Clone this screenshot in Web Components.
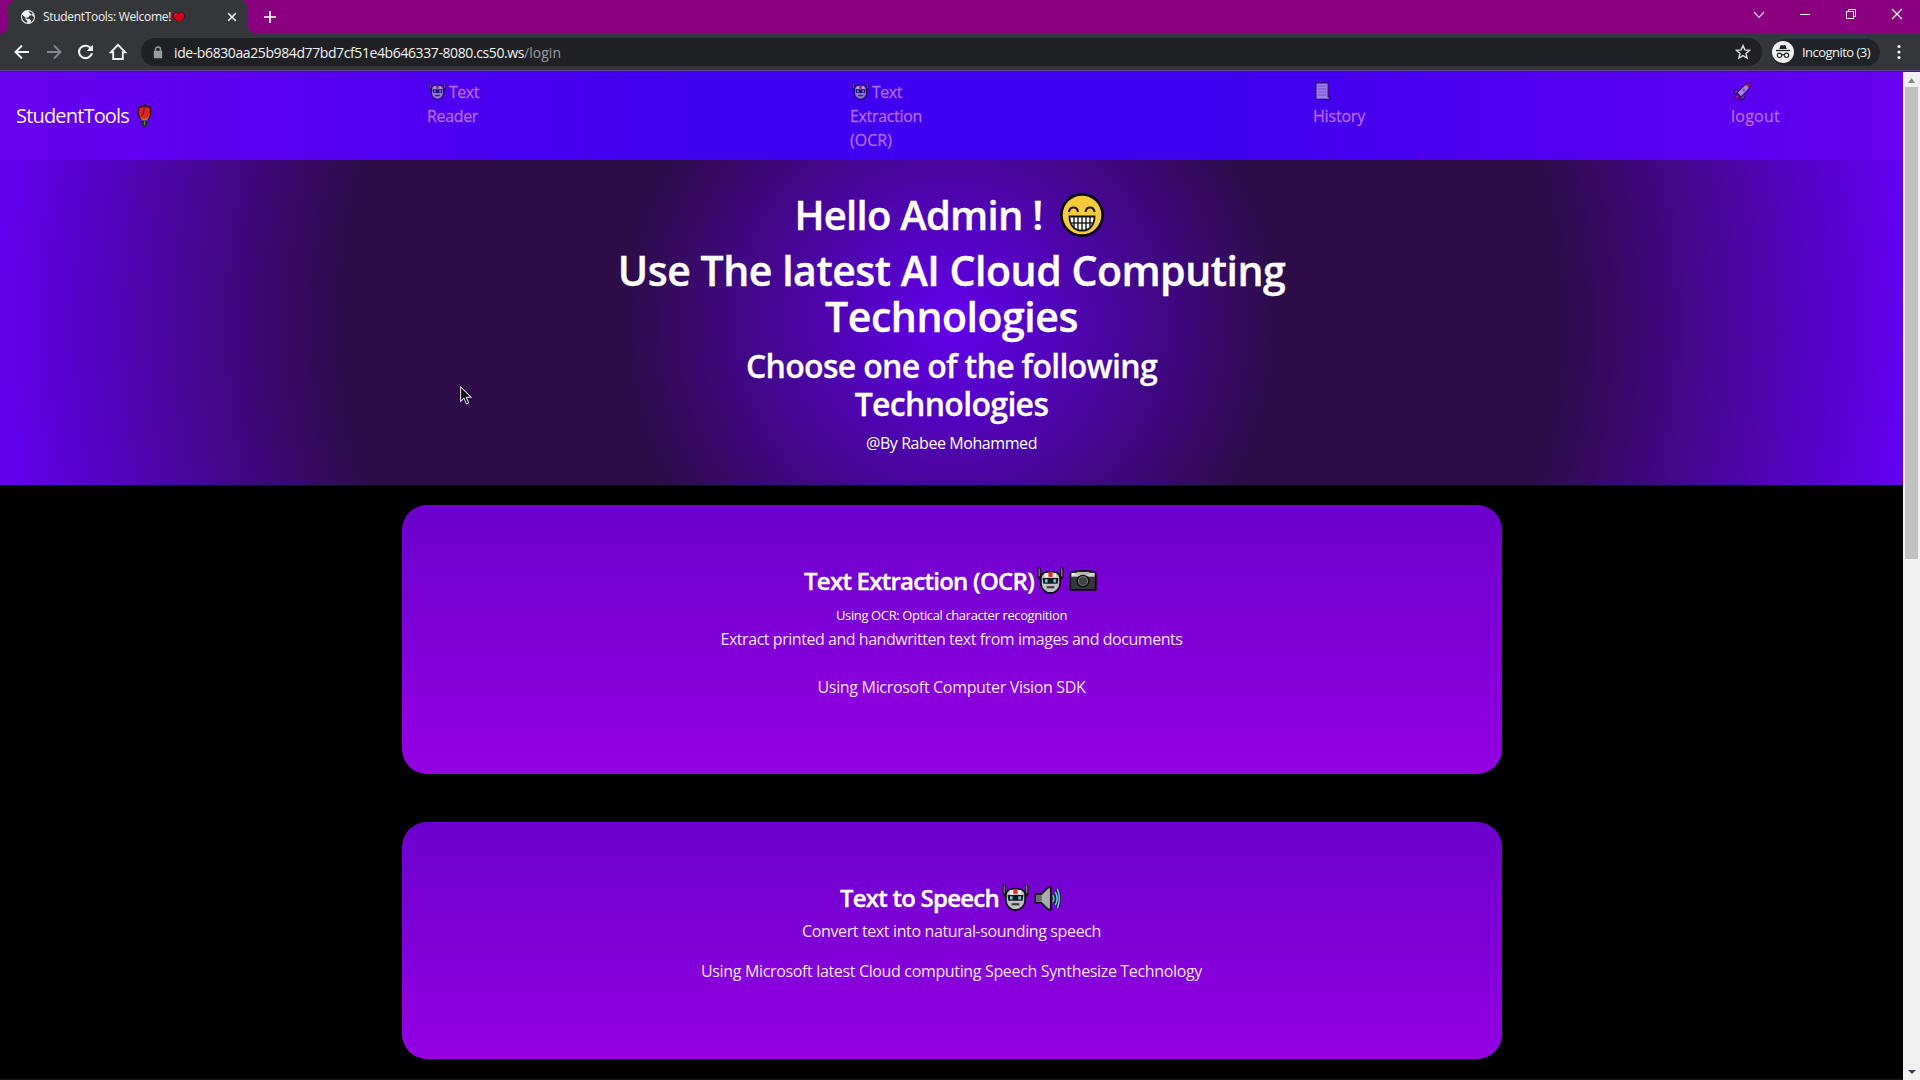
<!DOCTYPE html>
<html lang="en">
<head>
<meta charset="utf-8">
<title>StudentTools: Welcome!</title>
<style>
html,body{margin:0;height:100%;background:#000;overflow:hidden}
body{font-family:"Open Sans","Noto Sans",sans-serif;color:#fff}
</style>
</head>
<body>
<student-app></student-app>
<script>
const ICONS = {
  globe: ['0 0 16 16', '<circle cx="8" cy="8" r="7" fill="#f1f1f3"/><path d="M2 5.8l3.4 2.6.3 2.4 1.6 1v2c-3-.4-5.2-3-5.3-6zM8.2 2.2l3 .6 1.6 1.7-1.6 1.9-2 .2-.4 1.7-2.2.2-.2 1.3 3 .2 1.7 1.4-.4 2c2-1 3.2-3 3.3-5.2" fill="#35363a"/>'],
  heart: ['0 0 16 16', '<path d="M8 14.500L1.600 7.700V3.800L4 1.600h2l2 1.800 2-1.800h2l2.400 2.200v3.900z" fill="#d9001b" stroke="#3b0d18" stroke-width="1"/><path d="M3.500 4.500l1.500-1" stroke="#f0405a" stroke-width="1.300"/>'],
  x: ['0 0 10 10', '<path d="M1.2 1.2l7.600 7.600M8.800 1.2L1.2 8.800" stroke="#f1f1f3" stroke-width="1.600"/>'],
  plus: ['0 0 12 12', '<path d="M6 0v12M0 6h12" stroke="#fff" stroke-width="1.700"/>'],
  back: ['0 0 16 16', '<path d="M15 8H2M8 1.500L1.500 8 8 14.500" fill="none" stroke="#f1f1f3" stroke-width="1.900"/>'],
  fwd: ['0 0 16 16', '<path d="M1 8h13M8 1.500L14.500 8 8 14.500" fill="none" stroke="#85868d" stroke-width="1.800"/>'],
  reload: ['0 0 16 16', '<path d="M13.300 4.600A6.200 6.200 0 1 0 14.100 9.200" fill="none" stroke="#f1f1f3" stroke-width="2"/><path d="M15 .8v6.200H8.800z" fill="#f1f1f3"/>'],
  home: ['0 0 18 18', '<path d="M1.700 9.300L9 1.900l7.300 7.400h-2.500V16H4.200V9.300z" fill="none" stroke="#f1f1f3" stroke-width="1.900"/>'],
  lock: ['0 0 10 13', '<path d="M2.500 6V3.500a2.500 2.500 0 0 1 5 0V6" fill="none" stroke="#9b9ca0" stroke-width="1.400"/><rect x=".8" y="4.800" width="8.400" height="7.400" rx="1" fill="#9b9ca0"/>'],
  star: ['0 0 16 16', '<path d="M8 1.600l1.900 4.300 4.700.4-3.600 3.100 1.100 4.600L8 11.600 3.900 14 5 9.400 1.400 6.300l4.700-.4z" fill="none" stroke="#dadbde" stroke-width="1.400"/>'],
  spy: ['0 0 22 22', '<circle cx="11" cy="11" r="11" fill="#f1f1f3"/><path d="M7.300 8l1.100-3.500 1.200-.4 1.400.5 1.400-.5 1.200.4L14.700 8z" fill="#202124"/><path d="M4 9.500h14" stroke="#202124" stroke-width="1.300"/><g fill="none" stroke="#202124" stroke-width="1.100"><circle cx="7.500" cy="14.300" r="2.200"/><circle cx="14.500" cy="14.300" r="2.200"/><path d="M9.700 14q1.300-.8 2.600 0"/></g>'],
  dots: ['0 0 4 16', '<circle cx="2" cy="2.500" r="1.600"/><circle cx="2" cy="8" r="1.600"/><circle cx="2" cy="13.500" r="1.600"/>'],
  chev: ['0 0 12 8', '<path d="M1 1l5 5.300L11 1" fill="none" stroke="#f0c8ee" stroke-width="1.200"/>'],
  min: ['0 0 12 12', '<path d="M1 6.500h10" stroke="#fff"/>'],
  restore: ['0 0 12 12', '<path d="M3.500 3.500v-2h7v7h-2M1.500 3.500h7v7h-7z" fill="none" stroke="#fff"/>'],
  close: ['0 0 12 12', '<path d="M1 1l10 10M11 1L1 11" stroke="#fff" stroke-width="1.150"/>'],
  robot: ['0 0 28 28', '<path d="M2.200.5v9.500l2.500 4M25.800.5v9.500l-2.500 4" fill="none" stroke="#15151a" stroke-width="3.400"/><path d="M2.300 1.500v8M25.700 1.500v8" stroke="#8f9096" stroke-width="1.100"/><path d="M4 10.500C4.500 7 8.500 4.800 14 4.800S23.500 7 24 10.500V17c0 5-4.500 10-10 10S4 22 4 17z" fill="#bfc1c5" stroke="#111115" stroke-width="1.900"/><path d="M8 6.500h3.500v4H8zM16.500 6.500H20v4h-3.500z" fill="#f2f2f2"/><path d="M12 5.500h4v4.700h-4z" fill="#e52a20"/><path d="M5.800 11.300h16.400l-.8 6H6.600z" fill="#16171b"/><path d="M8.200 12.700h2.800v3.500H8.200zM17 12.700h2.800v3.500H17z" fill="#68c4f4"/><path d="M10 21h8" stroke="#37383c" stroke-width="2.200"/>'],
  camera: ['0 0 28 22', '<path d="M1.200 4.200L3 2h3l1-1h14l1 1h3l1.800 2.200v16.600H1.200z" fill="#34363b" stroke="#0d0d10" stroke-width="1.800"/><path d="M2.300 3h23.400v4H2.300z" fill="#d2d2d4"/><path d="M8 2h12v3H8z" fill="#b3b4b8"/><path d="M3 3.500h2.500v2H3z" fill="#fff"/><circle cx="14" cy="11.500" r="5.900" fill="#6d7076" stroke="#0d0d10" stroke-width="1.500"/><circle cx="14" cy="11.500" r="3.900" fill="#3d4249"/>'],
  speaker: ['0 0 28 26', '<path d="M1.500 8.500h6L15 1.500h2.500v23H15l-7.500-7h-6z" fill="#a9abb0" stroke="#111115" stroke-width="1.900"/><path d="M2.500 9.500H8v7H2.500z" fill="#67696f"/><g fill="none" stroke="#18212e" stroke-width="3.600"><path d="M19.500 9.500q2 3.500 0 7M22 6q4 7 0 14M24.200 3q4.300 10 0 20"/></g><g fill="none" stroke="#79bff0" stroke-width="1.600"><path d="M19.500 9.500q2 3.500 0 7M22 6q4 7 0 14M24.200 3q4.300 10 0 20"/></g>'],
  grin: ['0 0 44 44', '<circle cx="22" cy="22" r="20.600" fill="#f8cb3c" stroke="#080808" stroke-width="2.600"/><g fill="none" stroke="#202020" stroke-width="2.100"><path d="M9 19q.6-4.500 4.500-4.500T18 19M25.500 19q.6-4.500 4.500-4.500t4.500 4.500"/></g><path d="M9.500 23.500h25c0 8-4.500 14.200-12.500 14.200S9.500 31.500 9.500 23.500z" fill="#fff" stroke="#151515" stroke-width="1.800"/><path d="M10 30h24M14 24v10M18 24v13M22 24v13.500M26 24v13M30 24v10" stroke="#252525" stroke-width="1.500"/>'],
  rose: ['0 0 16 26', '<path d="M8 1.200L10 3h3.500l1 2.500v7l-2.500 4H4l-2.500-4v-7L3 3h3z" fill="#e0261e" stroke="#281510" stroke-width="1.800"/><path d="M8 3l-1 6-2 4" fill="none" stroke="#a60f16" stroke-width="1.600"/><path d="M3 14l2.500 4h5L13 14l-3 1.500H6z" fill="#a58430"/><path d="M4 19.500h8M5 22.500h6M8 18v7.500" stroke="#28282b" stroke-width="2.600"/><path d="M8 18v5" stroke="#5f7a48" stroke-width="1.300"/>'],
  page: ['0 0 16 18', '<path d="M1 .8h13v13.500h1.200v3H1z" fill="#d3cbe5" stroke="#18101f" stroke-width="1.200"/><path d="M3 4h9M3 7h9M3 10h9M3 13h9" stroke="#8f83ad" stroke-width="1"/>'],
  rocket: ['0 0 20 20', '<path d="M5 8H2.500L1 12.500l3-.5M12 14.500v2.700L7.500 19l.5-3.200" fill="#348fd0" stroke="#1e1020" stroke-width="1.200"/><path d="M4 11L12.500 3l6-2-2 6.500L8.500 16z" fill="#d5d4df" stroke="#1e1020" stroke-width="1.300"/><path d="M13.500 2.800l5-1.800-1.700 5.200z" fill="#e0182c"/><circle cx="11.500" cy="8.500" r="1.500" fill="#7a8296"/><path d="M4 13l3 3-5.500 2.500z" fill="#ee4228" stroke="#301020"/>'],
  cursor: ['0 0 13 20', '<path d="M.7 1v15.200l3.600-3.400 2.600 6 2.500-1.100-2.600-5.800h5.300z" fill="#08080a" stroke="#e9e4f0" stroke-width="1.100"/>'],
  up: ['0 0 8 5', '<path d="M0 5l4-5 4 5z" fill="#8a8a8a"/>'],
  down: ['0 0 8 5', '<path d="M0 0l4 5 4-5z" fill="#4a4050"/>'],
};

class Base extends HTMLElement {
  constructor(){ super(); this.attachShadow({mode:'open'}); }
}

/* <ui-icon name w h>: inline vector icon */
customElements.define('ui-icon', class extends Base {
  connectedCallback(){
    const [vb, art] = ICONS[this.getAttribute('name')];
    const w = this.getAttribute('w'), h = this.getAttribute('h');
    this.shadowRoot.innerHTML = `<style>:host{display:block;flex:none;width:${w}px;height:${h}px}svg{display:block}</style>
      <svg width="${w}" height="${h}" viewBox="${vb}" preserveAspectRatio="none" fill="#f1f1f3">${art}</svg>`;
  }
});

/* <fit-text w>: one line of text, tracked so that it fills the given width */
customElements.define('fit-text', class extends Base {
  connectedCallback(){
    const w = +this.getAttribute('w');
    this.shadowRoot.innerHTML = `<style>:host{display:block;flex:none;width:${w}px;white-space:nowrap}span{display:inline-block}</style><span><slot></slot></span>`;
    const span = this.shadowRoot.querySelector('span');
    const fit = () => {
      span.style.letterSpacing = '0px';
      span.style.letterSpacing = (w - span.getBoundingClientRect().width) / this.textContent.length + 'px';
    };
    requestAnimationFrame(fit);
    fit();
  }
});

/* <fit-heading w n>: centred wrapping heading whose first line (n characters) is tracked to width w */
customElements.define('fit-heading', class extends Base {
  connectedCallback(){
    const w = +this.getAttribute('w'), n = +this.getAttribute('n');
    this.shadowRoot.innerHTML = `<style>:host{display:block;flex:none;width:${w + 150}px;text-align:center}</style><span><slot></slot></span>`;
    const span = this.shadowRoot.querySelector('span');
    const fit = () => {
      span.style.letterSpacing = '0px';
      const range = document.createRange();
      range.selectNodeContents(this);
      span.style.letterSpacing = (w - range.getClientRects()[0].width) / n + 'px';
    };
    requestAnimationFrame(fit);
    fit();
  }
});

customElements.define('browser-chrome', class extends Base {
  connectedCallback(){
    this.shadowRoot.innerHTML = `<style>
      :host{display:block;height:72px;font-size:12px;color:#f1f1f3}
      .strip{height:34px;background:#8b0080;display:flex;padding-left:8px;box-sizing:border-box}
      .tab{position:relative;width:240px;height:34px;background:#35363a;border-radius:8px 8px 0 0;display:flex;align-items:center;box-sizing:border-box;padding-left:12px}
      .tab:before,.tab:after{content:"";position:absolute;bottom:0;width:8px;height:8px}
      .tab:before{left:-8px;background:radial-gradient(circle at 0 0,transparent 7.500px,#35363a 8px)}
      .tab:after{right:-8px;background:radial-gradient(circle at 100% 0,transparent 7.500px,#35363a 8px)}
      .tab fit-text{margin-left:7px;line-height:18px}
      .heart{margin-left:1px}.x{margin-left:41px}
      .plus{margin:11px 0 0 16px}
      .win{margin-left:auto;display:flex;gap:34px;padding:8px 17px 0 0}
      .win .chev{margin-top:3px}
      .bar{height:36px;background:#35363a;display:flex;align-items:center;padding-left:14px}
      .fwd{margin-left:16px}.rel{margin-left:15px}.home{margin-left:15px}
      .url{margin-left:14px;width:1621px;height:28px;box-sizing:border-box;border-radius:14px;background:#202124;display:flex;align-items:center;padding:0 11px 0 12px;font-size:14px;line-height:20px}
      .url fit-text{padding-top:1px}
      .url .addr{margin-left:11px}.url .path{color:#9a9ba0}
      .star{margin-left:auto}
      .inc{margin-left:10px;width:108px;height:27px;border-radius:14px;background:#202328;display:flex;align-items:center;font-size:13px;line-height:18px}
      .inc ui-icon{margin:0 8px 0 0}
      .dots{margin-left:17px}
      .edge{height:2px;background:linear-gradient(#5c4695 1px,#3c10b0 1px)}
    </style>
    <div class="strip">
      <div class="tab"><ui-icon name="globe" w="16" h="16"></ui-icon><fit-text w="128">StudentTools: Welcome!</fit-text><ui-icon class="heart" name="heart" w="14" h="13"></ui-icon><ui-icon class="x" name="x" w="10" h="10"></ui-icon></div>
      <ui-icon class="plus" name="plus" w="12" h="12"></ui-icon>
      <div class="win"><ui-icon class="chev" name="chev" w="12" h="8"></ui-icon><ui-icon name="min" w="12" h="12"></ui-icon><ui-icon name="restore" w="12" h="12"></ui-icon><ui-icon name="close" w="12" h="12"></ui-icon></div>
    </div>
    <div class="bar">
      <ui-icon name="back" w="16" h="16"></ui-icon><ui-icon class="fwd" name="fwd" w="16" h="16"></ui-icon><ui-icon class="rel" name="reload" w="17" h="16"></ui-icon><ui-icon class="home" name="home" w="18" h="18"></ui-icon>
      <div class="url"><ui-icon name="lock" w="10" h="13"></ui-icon><fit-text class="addr" w="350">ide-b6830aa25b984d77bd7cf51e4b646337-8080.cs50.ws</fit-text><fit-text class="path" w="37">/login</fit-text><ui-icon class="star" name="star" w="16" h="16"></ui-icon></div>
      <div class="inc"><ui-icon name="spy" w="22" h="22"></ui-icon><fit-text w="68">Incognito (3)</fit-text></div>
      <ui-icon class="dots" name="dots" w="4" h="16"></ui-icon>
    </div>
    <div class="edge"></div>`;
  }
});

customElements.define('site-nav', class extends Base {
  connectedCallback(){
    this.shadowRoot.innerHTML = `<style>
      :host{display:grid;grid-template-columns:411px 423px 463px 418px 1fr;height:88px;padding-left:16px;box-sizing:border-box;
        background:linear-gradient(90deg,#6600ee 0,#5a00f0 14%,#4a00f0 26%,#3e00ee 38%,#3e00ee 64%,#4e00f0 78%,#5c00f0 92%,#6600ee 100%)}
      .brand{display:flex;gap:8px;padding-top:29px;font-size:20px;line-height:30px;color:#fff0ff}
      .brand ui-icon{margin-top:3px}
      .item{padding-top:8px;font-size:16px;line-height:24px;color:#b368f5;-webkit-text-stroke:.3px #b368f5}
      .row{display:flex;height:24px}.row ui-icon{opacity:.62;margin:2px 3px 0 2px}
    </style>
    <div class="brand"><fit-text w="113">StudentTools</fit-text><ui-icon name="rose" w="15" h="24"></ui-icon></div>
    <div class="item"><div class="row"><ui-icon name="robot" w="17" h="18"></ui-icon><fit-text w="30">Text</fit-text></div><fit-text w="51">Reader</fit-text></div>
    <div class="item"><div class="row"><ui-icon name="robot" w="17" h="18"></ui-icon><fit-text w="30">Text</fit-text></div><fit-text w="72">Extraction</fit-text><fit-text w="42">(OCR)</fit-text></div>
    <div class="item"><div class="row"><ui-icon name="page" w="15" h="18"></ui-icon></div><fit-text w="52">History</fit-text></div>
    <div class="item"><div class="row"><ui-icon name="rocket" w="19" h="19"></ui-icon></div><fit-text w="49">logout</fit-text></div>`;
  }
});

customElements.define('hero-banner', class extends Base {
  connectedCallback(){
    this.shadowRoot.innerHTML = `<style>
      :host{display:flex;flex-direction:column;align-items:center;height:325px;padding-top:30px;box-sizing:border-box;
        background:radial-gradient(circle,#6200ee 0,#2d0c48 34.300%,#2d0c48 62.500%,#6200ee 98.500%)}
      .hi{display:flex;gap:17px;font:600 40px/48px "Open Sans",sans-serif;padding-right:5px;-webkit-text-stroke:.4px #fff}
      .hi fit-text{padding-top:1px;height:47px}
      .hi ui-icon{margin-top:3px}
      .big{margin-top:9px;font:600 41px/46px "Open Sans",sans-serif;-webkit-text-stroke:.4px #fff}
      .mid{margin-top:8px;font:600 32px/38px "Open Sans",sans-serif;-webkit-text-stroke:.3px #fff}
      .by{margin-top:8px;font-size:16px;line-height:24px}
    </style>
    <div class="hi"><fit-text w="248">Hello Admin !</fit-text><ui-icon name="grin" w="44" h="44"></ui-icon></div>
    <fit-heading class="big" w="668" n="32">Use The latest AI Cloud Computing Technologies</fit-heading>
    <fit-heading class="mid" w="411" n="27">Choose one of the following Technologies</fit-heading>
    <fit-text class="by" w="171">@By Rabee Mohammed</fit-text>`;
  }
});

/* <tool-card>: title row in the "title" slot, body lines in the default slot */
customElements.define('tool-card', class extends Base {
  connectedCallback(){
    this.shadowRoot.innerHTML = `<style>
      :host{display:flex;flex-direction:column;align-items:center;width:1100px;padding-top:60px;box-sizing:border-box;border-radius:25px;
        background:linear-gradient(#6c00cc,#9300e2);font-size:16px;line-height:24px;color:#f6e2ff}
      .title{display:flex;gap:3px;height:29px;font:600 24px/31px "Open Sans",sans-serif;color:#fff;-webkit-text-stroke:.4px #fff;padding-right:2px}
    </style><div class="title"><slot name="title"></slot></div><slot></slot>`;
  }
});

customElements.define('page-scrollbar', class extends Base {
  connectedCallback(){
    this.shadowRoot.innerHTML = `<style>
      :host{display:flex;flex-direction:column;align-items:center;width:17px;background:#f1f1f1;box-sizing:border-box;padding:6px 0 6px}
      .thumb{width:13px;height:472px;background:#c1c1c1;margin:4px 0 auto}
    </style><ui-icon name="up" w="7" h="5"></ui-icon><div class="thumb"></div><ui-icon name="down" w="8" h="4"></ui-icon>`;
  }
});

customElements.define('student-app', class extends Base {
  connectedCallback(){
    this.shadowRoot.innerHTML = `<style>
      :host{display:flex;flex-direction:column;width:1920px;height:1080px;overflow:hidden;position:relative}
      .view{flex:1;display:flex;min-height:0}
      main{width:1903px;background:#000;box-sizing:border-box;border-bottom:1px solid #161616}
      .cards{display:flex;flex-direction:column;align-items:center;gap:48px;padding-top:20px}
      .one{height:269px}.two{height:237px}
      .sm{font-size:13px;line-height:20px;margin-top:11px;color:#fff}
      .a{margin-top:2px}.b{margin-top:24px}.c{margin-top:8px}.d{margin-top:16px}
      .robot{margin-top:2px}.cam{margin:5px 0 0 2px}.spk{margin:4px 0 0 2px}
      .cursor{position:absolute;left:460px;top:386px}
    </style>
    <browser-chrome></browser-chrome>
    <div class="view">
      <main>
        <site-nav></site-nav>
        <hero-banner></hero-banner>
        <div class="cards">
          <tool-card class="one">
            <fit-text slot="title" w="230">Text Extraction (OCR)</fit-text><ui-icon class="robot" slot="title" name="robot" w="27" h="27"></ui-icon><ui-icon class="cam" slot="title" name="camera" w="28" h="21"></ui-icon>
            <fit-text class="sm" w="231">Using OCR: Optical character recognition</fit-text>
            <fit-text class="a" w="462">Extract printed and handwritten text from images and documents</fit-text>
            <fit-text class="b" w="268">Using Microsoft Computer Vision SDK</fit-text>
          </tool-card>
          <tool-card class="two">
            <fit-text slot="title" w="159">Text to Speech</fit-text><ui-icon class="robot" slot="title" name="robot" w="27" h="27"></ui-icon><ui-icon class="spk" slot="title" name="speaker" w="27" h="25"></ui-icon>
            <fit-text class="c" w="299">Convert text into natural-sounding speech</fit-text>
            <fit-text class="d" w="501">Using Microsoft latest Cloud computing Speech Synthesize Technology</fit-text>
          </tool-card>
        </div>
      </main>
      <page-scrollbar></page-scrollbar>
    </div>
    <ui-icon class="cursor" name="cursor" w="12" h="19"></ui-icon>`;
  }
});
</script>
</body>
</html>
